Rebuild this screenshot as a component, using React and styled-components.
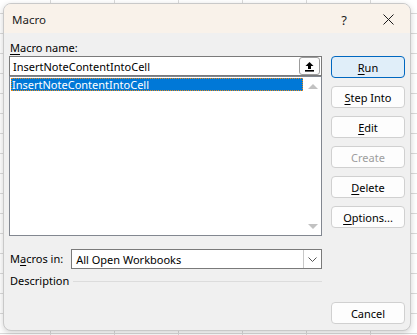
import React from "react";
import styled, { createGlobalStyle } from "styled-components";

const GlobalStyle = createGlobalStyle`
	html, body {
		margin: 0;
		padding: 0;
	}
	body {
		width: 417px;
		height: 335px;
		overflow: hidden;
		font-family: "Noto Sans", "Open Sans", sans-serif;
		font-size: 11px;
		color: #000;
		background-color: #ffffff;
		background-image:
			linear-gradient(to right, #dadada 1px, transparent 1px),
			linear-gradient(to bottom, #dadada 1px, transparent 1px);
		background-size: 64px 20px;
		background-position: 50px 13px;
	}
`;

const DIALOG = styled.div`
	margin: 3px 0 0 3px;
	width: 406px;
	height: 326px;
	border: 1px solid #c9c9c9;
	border-radius: 8px;
	background: #f0f0f0;
	box-shadow: 0 2px 6px rgba(0, 0, 0, 0.18);
	display: flex;
	flex-direction: column;
	overflow: hidden;
`;

const TITLEBAR = styled.div`
	height: 29px;
	background: #f9f2ea;
	display: flex;
	align-items: center;
	padding-left: 8px;
`;

const TITLE = styled.div`
	flex: 1;
	font-size: 11.5px;
	color: #1b1b1b;
	padding-top: 2px;
`;

const TITLE_BTN = styled.div`
	width: 44px;
	height: 29px;
	display: flex;
	align-items: center;
	justify-content: center;
	font-size: 13px;
	color: #1b1b1b;
	padding-top: 2px;
	box-sizing: border-box;
`;

const BODY = styled.div`
	flex: 1;
	display: grid;
	grid-template-columns: 313px 74px;
	column-gap: 9px;
	padding: 7px 5px 6px 5px;
`;

const LEFT = styled.div`
	display: flex;
	flex-direction: column;
`;

const RIGHT = styled.div`
	display: flex;
	flex-direction: column;
	gap: 8px;
	padding-top: 16px;
`;

const LABEL = styled.div`
	height: 16px;
	line-height: 16px;
	padding-left: 1px;
	white-space: nowrap;
`;

const KEY = styled.span`
	text-decoration: underline;
	text-underline-offset: 2px;
`;

const INPUT = styled.div`
	height: 18px;
	border: 1px solid #7a7a7a;
	background: #fff;
	display: flex;
	align-items: center;
	padding-left: 3px;
	padding-right: 1px;
`;

const INPUT_TEXT = styled.div`
	flex: 1;
	white-space: nowrap;
`;

const UPLOAD = styled.div`
	width: 19px;
	height: 16px;
	border: 1px solid #9c9c9c;
	border-radius: 3px;
	background: #fdfdfd;
	display: flex;
	align-items: center;
	justify-content: center;
`;

const LIST = styled.div`
	height: 158px;
	border: 1px solid #828790;
	background: #fff;
	display: flex;
`;

const LIST_ITEMS = styled.div`
	flex: 1;
	padding: 1px 1px;
`;

const ITEM = styled.div`
	height: 13px;
	line-height: 13px;
	padding-left: 1px;
	background: ${(p) => (p.selected ? "#0078d7" : "transparent")};
	color: ${(p) => (p.selected ? "#fff" : "#000")};
	outline: ${(p) => (p.selected ? "1px dotted #e88a1a" : "none")};
	outline-offset: -1px;
	white-space: nowrap;
`;

const SCROLL = styled.div`
	width: 17px;
	display: flex;
	flex-direction: column;
	justify-content: space-between;
	align-items: center;
	padding: 7px 0 6px;
	background: #fff;
`;

const ARROW = styled.div`
	width: 0;
	height: 0;
	border-left: 5px solid transparent;
	border-right: 5px solid transparent;
	${(p) =>
		p.down
			? "border-top: 5px solid #c2c2c2;"
			: "border-bottom: 5px solid #c2c2c2;"}
`;

const ROW = styled.div`
	display: flex;
	align-items: center;
	margin-top: ${(p) => p.top || 0}px;
`;

const SELECT = styled.div`
	margin-left: 8px;
	flex: 1;
	height: 18px;
	border: 1px solid #7a7a7a;
	background: #fff;
	display: flex;
	align-items: center;
	padding-left: 4px;
`;

const SELECT_TEXT = styled.div`
	flex: 1;
	white-space: nowrap;
`;

const DROP = styled.div`
	width: 17px;
	height: 18px;
	border-left: 1px solid #c8c8c8;
	display: flex;
	align-items: center;
	justify-content: center;
`;

const RULE = styled.div`
	flex: 1;
	height: 1px;
	background: #dcdcdc;
	margin-left: 4px;
`;

const BUTTON = styled.div`
	height: 20px;
	border: 1px solid ${(p) => (p.primary ? "#0067c0" : "#d0d0d0")};
	border-radius: 4px;
	background: ${(p) => (p.primary ? "#e0eef9" : "#fdfdfd")};
	color: ${(p) => (p.disabled ? "#9d9d9d" : "#000")};
	display: flex;
	align-items: center;
	justify-content: center;
	white-space: nowrap;
	margin-top: ${(p) => (p.bottom ? "auto" : "0")};
`;

function UploadIcon() {
	return (
		<svg width="11" height="11" viewBox="0 0 11 11">
			<path d="M5.5 1 L1.5 5 H4 V8 H7 V5 H9.5 Z" fill="#000" />
			<rect x="1" y="9" width="9" height="1.6" fill="#000" />
		</svg>
	);
}

function CloseIcon() {
	return (
		<svg width="11" height="11" viewBox="0 0 11 11">
			<path d="M0.5 0.5 L10.5 10.5 M10.5 0.5 L0.5 10.5" stroke="#1b1b1b" strokeWidth="1" />
		</svg>
	);
}

function Chevron() {
	return (
		<svg width="9" height="5" viewBox="0 0 9 5">
			<path d="M0.5 0.5 L4.5 4.5 L8.5 0.5" stroke="#555" strokeWidth="1" fill="none" />
		</svg>
	);
}

export default function App() {
	return (
		<>
			<GlobalStyle />
			<DIALOG>
				<TITLEBAR>
					<TITLE>Macro</TITLE>
					<TITLE_BTN>?</TITLE_BTN>
					<TITLE_BTN>
						<CloseIcon />
					</TITLE_BTN>
				</TITLEBAR>
				<BODY>
					<LEFT>
						<LABEL>
							<KEY>M</KEY>acro name:
						</LABEL>
						<INPUT>
							<INPUT_TEXT>InsertNoteContentIntoCell</INPUT_TEXT>
							<UPLOAD>
								<UploadIcon />
							</UPLOAD>
						</INPUT>
						<LIST>
							<LIST_ITEMS>
								<ITEM selected>InsertNoteContentIntoCell</ITEM>
							</LIST_ITEMS>
							<SCROLL>
								<ARROW />
								<ARROW down />
							</SCROLL>
						</LIST>
						<ROW top={13}>
							<LABEL>
								M<KEY>a</KEY>cros in:
							</LABEL>
							<SELECT>
								<SELECT_TEXT>All Open Workbooks</SELECT_TEXT>
								<DROP>
									<Chevron />
								</DROP>
							</SELECT>
						</ROW>
						<ROW top={4}>
							<LABEL>Description</LABEL>
							<RULE />
						</ROW>
					</LEFT>
					<RIGHT>
						<BUTTON primary>
							<span><KEY>R</KEY>un</span>
						</BUTTON>
						<BUTTON>
							<span><KEY>S</KEY>tep Into</span>
						</BUTTON>
						<BUTTON>
							<span><KEY>E</KEY>dit</span>
						</BUTTON>
						<BUTTON disabled>Create</BUTTON>
						<BUTTON>
							<span><KEY>D</KEY>elete</span>
						</BUTTON>
						<BUTTON>
							<span><KEY>O</KEY>ptions...</span>
						</BUTTON>
						<BUTTON bottom>Cancel</BUTTON>
					</RIGHT>
				</BODY>
			</DIALOG>
		</>
	);
}
